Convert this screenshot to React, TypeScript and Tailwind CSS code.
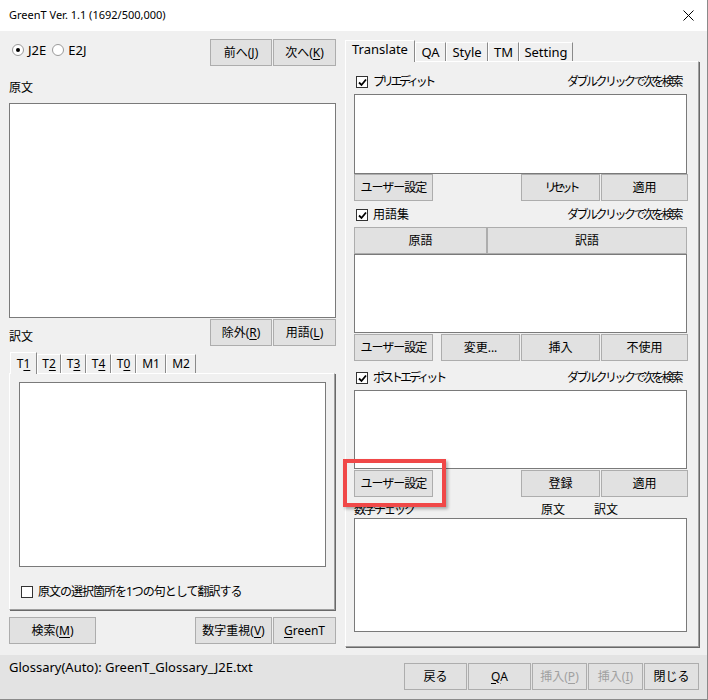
import type { ReactNode } from "react";

const FONT = "font-['Noto_Sans','Noto_Sans_CJK_JP',sans-serif]";

function Btn({
  w,
  children,
  disabled,
}: {
  w: string;
  children: ReactNode;
  disabled?: boolean;
}) {
  return (
    <div
      className={`flex h-[27px] shrink-0 items-center justify-center border border-[#adadad] bg-[#e1e1e1] text-[12px] leading-none ${
        disabled ? "text-[#a0a0a0]" : "text-black"
      } ${w}`}
    >
      {children}
    </div>
  );
}

function Check({ checked, label, tr = "" }: { checked?: boolean; label: string; tr?: string }) {
  return (
    <div className="flex h-[16px] items-center gap-[5px] text-[12px] leading-[16px]">
      <span className="flex h-[12px] w-[12px] items-center justify-center border border-[#333] bg-white">
        {checked && (
          <svg width="9" height="9" viewBox="0 0 9 9">
            <path d="M1 4.5 L3.5 7 L8 1.5" fill="none" stroke="#000" strokeWidth="1.8" />
          </svg>
        )}
      </span>
      <span className={tr}>{label}</span>
    </div>
  );
}

function Radio({ checked, label }: { checked?: boolean; label: string }) {
  return (
    <div className="flex items-center gap-[4px] text-[13px] leading-[16px]">
      <span className="flex h-[12px] w-[12px] items-center justify-center rounded-full border border-[#9a9a9a] bg-white">
        {checked && <span className="h-[4px] w-[4px] rounded-full bg-black" />}
      </span>
      <span>{label}</span>
    </div>
  );
}

function Box({ h }: { h: string }) {
  return <div className={`w-[333px] border border-[#7a7a7a] bg-white ${h}`} />;
}

function Mn({ c }: { c: string }) {
  return <span className="underline underline-offset-2">{c}</span>;
}

function Hint() {
  return (
    <span className="text-[12px] leading-[16px] tracking-[-2.5px]">ダブルクリックで次を検索</span>
  );
}

const leftTabs: { w: string; label: ReactNode }[] = [
  { w: "w-[27px]", label: <>T<Mn c="1" /></> },
  { w: "w-[24px]", label: <>T<Mn c="2" /></> },
  { w: "w-[25px]", label: <>T<Mn c="3" /></> },
  { w: "w-[25px]", label: <>T<Mn c="4" /></> },
  { w: "w-[25px]", label: <>T<Mn c="0" /></> },
  { w: "w-[30px]", label: <>M1</> },
  { w: "w-[30px]", label: <>M2</> },
];

const rightTabs = [
  { w: "w-[70px]", label: "Translate" },
  { w: "w-[31px]", label: "QA" },
  { w: "w-[42px]", label: "Style" },
  { w: "w-[31px]", label: "TM" },
  { w: "w-[54px]", label: "Setting" },
];

const USER = <span className="tracking-[-1px]">ユーザー設定</span>;

export default function App() {
  return (
    <div
      className={`relative flex h-[700px] w-[708px] flex-col overflow-hidden border-r border-b border-[#8a8a8a] bg-[#f0f0f0] text-black ${FONT}`}
    >
      {/* title bar */}
      <div className="flex h-[31px] shrink-0 items-center justify-between bg-white pl-[9px] pr-[13px] text-[11px]">
        <span>GreenT Ver. 1.1 (1692/500,000)</span>
        <svg width="11" height="11" viewBox="0 0 11 11">
          <path d="M0.5 0.5 L10.5 10.5 M10.5 0.5 L0.5 10.5" stroke="#000" strokeWidth="1" />
        </svg>
      </div>

      {/* body */}
      <div className="flex h-[624px] shrink-0">
        {/* left column */}
        <div className="ml-[9px] flex w-[327px] flex-col">
          <div className="mt-[8px] flex h-[27px] items-center justify-between">
            <div className="mb-[5px] ml-[3px] flex items-center gap-[6px]">
              <Radio checked label="J2E" />
              <Radio label="E2J" />
            </div>
            <div className="flex gap-[1px]">
              <Btn w="w-[62px]">前へ(<Mn c="J" />)</Btn>
              <Btn w="w-[63px]">次へ(<Mn c="K" />)</Btn>
            </div>
          </div>
          <div className="mt-[14px] h-[16px] text-[12px] leading-[16px]">原文</div>
          <div className="mt-[7px] h-[215px] w-[327px] border border-[#7a7a7a] bg-white" />
          <div className="mt-[1px] flex h-[27px] items-end justify-between">
            <span className="pb-[1px] text-[12px] leading-[16px]">訳文</span>
            <div className="flex gap-[1px] self-start">
              <Btn w="w-[62px]">除外(<Mn c="R" />)</Btn>
              <Btn w="w-[63px]">用語(<Mn c="L" />)</Btn>
            </div>
          </div>
          <div className="mt-[6px] flex h-[21px] items-end pl-[1px]">
            {leftTabs.map((t, i) => (
              <div
                key={i}
                className={`flex shrink-0 items-center justify-center border-t border-l border-r border-t-white border-l-white border-r-[#8a8a8a] text-[12px] leading-none ${t.w} ${
                  i === 0 ? "relative z-10 -mb-[1px] h-[22px] bg-[#f0f0f0]" : "h-[19px]"
                }`}
              >
                {t.label}
              </div>
            ))}
          </div>
          <div className="flex h-[237px] w-[326px] flex-col border-t border-l border-r border-b border-t-white border-l-white border-r-[#a0a0a0] border-b-[#a0a0a0] shadow-[1px_1px_0_#696969]">
            <div className="ml-[9px] mt-[8px] h-[185px] w-[307px] border border-[#7a7a7a] bg-white" />
            <div className="ml-[11px] mt-[17px]">
              <Check label="原文の選択箇所を1つの句として翻訳する" tr="tracking-[-1px]" />
            </div>
          </div>
          <div className="mt-[7px] flex justify-between">
            <Btn w="w-[87px]">検索(<Mn c="M" />)</Btn>
            <div className="flex gap-[1px]">
              <Btn w="w-[77px]">数字重視(<Mn c="V" />)</Btn>
              <Btn w="w-[63px]"><Mn c="G" />reenT</Btn>
            </div>
          </div>
        </div>

        {/* right column */}
        <div className="ml-[9px] flex w-[354px] flex-col">
          <div className="mt-[9px] flex h-[21px] items-end">
            {rightTabs.map((t, i) => (
              <div
                key={t.label}
                className={`flex shrink-0 items-center justify-center border-t border-l border-r border-t-white border-l-white border-r-[#8a8a8a] text-[13px] leading-none ${t.w} ${
                  i === 0
                    ? "relative z-10 -mb-[1px] h-[22px] bg-[#f0f0f0] pb-[4px]"
                    : "h-[19px]"
                }`}
              >
                {t.label}
              </div>
            ))}
          </div>
          <div className="flex h-[586px] w-[354px] flex-col border-t border-l border-r border-b border-t-white border-l-white border-r-[#a0a0a0] border-b-[#a0a0a0] pl-[8px] shadow-[1px_1px_0_#696969]">
            <div className="mt-[12px] flex w-[327px] items-center justify-between">
              <div className="ml-[2px]"><Check checked label="プリエディット" tr="tracking-[-3.3px]" /></div>
              <Hint />
            </div>
            <div className="mt-[4px]"><Box h="h-[80px]" /></div>
            <div className="flex w-[334px]">
              <Btn w="w-[79px]">{USER}</Btn>
              <div className="w-[88px]" />
              <Btn w="w-[79px]"><span className="tracking-[-4px]">リセット</span></Btn>
              <div className="w-[1px]" />
              <Btn w="w-[87px]">適用</Btn>
            </div>

            <div className="mt-[6px] flex w-[327px] items-center justify-between">
              <div className="ml-[2px]"><Check checked label="用語集" /></div>
              <Hint />
            </div>
            <div className="mt-[4px] flex w-[333px]">
              <Btn w="w-[133px]">原語</Btn>
              <Btn w="w-[200px]">訳語</Btn>
            </div>
            <Box h="h-[79px]" />
            <div className="mt-[1px] flex w-[334px]">
              <Btn w="w-[79px]">{USER}</Btn>
              <div className="w-[8px]" />
              <Btn w="w-[79px]">変更...</Btn>
              <div className="w-[1px]" />
              <Btn w="w-[79px]">挿入</Btn>
              <div className="w-[1px]" />
              <Btn w="w-[87px]">不使用</Btn>
            </div>

            <div className="mt-[9px] flex w-[327px] items-center justify-between">
              <div className="ml-[2px]"><Check checked label="ポストエディット" tr="tracking-[-3px]" /></div>
              <Hint />
            </div>
            <div className="mt-[4px]"><Box h="h-[79px]" /></div>
            <div className="mt-[1px] flex w-[334px]">
              <Btn w="w-[79px]">{USER}</Btn>
              <div className="w-[88px]" />
              <Btn w="w-[79px]">登録</Btn>
              <div className="w-[1px]" />
              <Btn w="w-[87px]">適用</Btn>
            </div>

            <div className="mt-[5px] flex h-[16px] text-[12px] leading-[16px]">
              <span className="w-[187px] tracking-[-2px]">数字チェック</span>
              <span className="w-[53px]">原文</span>
              <span>訳文</span>
            </div>
            <Box h="h-[114px]" />
          </div>
        </div>
      </div>

      {/* status bar */}
      <div className="flex h-[45px] shrink-0 items-start justify-between bg-[#e3e3e3] pl-[9px] pr-[8px]">
        <span className="pt-[4px] text-[13px] leading-[16px]">Glossary(Auto): GreenT_Glossary_J2E.txt</span>
        <div className="flex gap-[1px] pt-[8px]">
          <Btn w="w-[63px]">戻る</Btn>
          <Btn w="w-[63px]"><Mn c="Q" />A</Btn>
          <Btn w="w-[55px]" disabled>挿入(<Mn c="P" />)</Btn>
          <Btn w="w-[55px]" disabled>挿入(<Mn c="I" />)</Btn>
          <Btn w="w-[55px]">閉じる</Btn>
        </div>
      </div>

      {/* highlight annotation */}
      <div className="pointer-events-none absolute left-[343px] top-[459px] h-[48px] w-[103px] border-[4px] border-[#f04848] shadow-[2px_2px_3px_rgba(0,0,0,0.3)]" />
    </div>
  );
}
